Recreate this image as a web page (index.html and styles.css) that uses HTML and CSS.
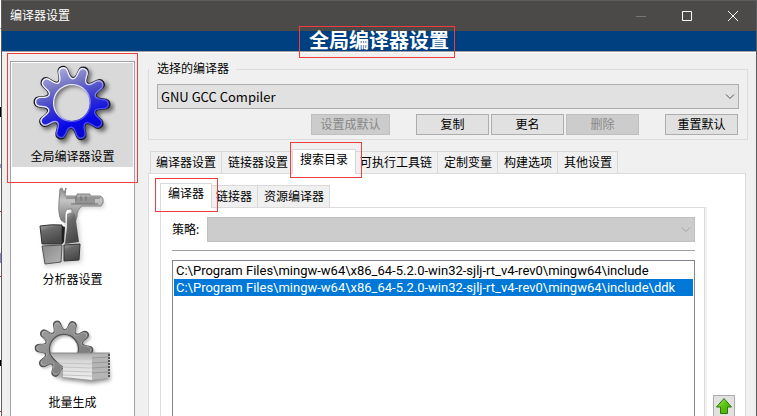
FILE: index.html
```html
<!DOCTYPE html>
<html lang="zh-CN">
<head>
<meta charset="utf-8">
<title>编译器设置</title>
<link rel="stylesheet" href="styles.css">
</head>
<body>
<svg class="defs" aria-hidden="true">
  <defs>
    <path id="gear" fill-rule="evenodd" d="M38.7 0Q38.7 4.8 32.1 4.9Q25.5 5 24.5 8Q23.6 11 28.9 15Q34.1 18.9 31.3 22.8Q28.5 26.6 23.1 22.8Q17.7 19 15.1 20.9Q12.6 22.7 14.5 29Q16.5 35.3 12 36.8Q7.4 38.3 5.3 32Q3.2 25.8 0 25.8Q-3.2 25.8 -5.3 32Q-7.4 38.3 -12 36.8Q-16.5 35.3 -14.5 29Q-12.6 22.7 -15.1 20.9Q-17.7 19 -23.1 22.8Q-28.5 26.6 -31.3 22.8Q-34.1 18.9 -28.9 15Q-23.6 11 -24.5 8Q-25.5 5 -32.1 4.9Q-38.7 4.8 -38.7 0Q-38.7 -4.8 -32.1 -4.9Q-25.5 -5 -24.5 -8Q-23.6 -11 -28.9 -15Q-34.1 -18.9 -31.3 -22.8Q-28.5 -26.6 -23.1 -22.8Q-17.7 -19 -15.1 -20.9Q-12.6 -22.7 -14.5 -29Q-16.5 -35.3 -12 -36.8Q-7.4 -38.3 -5.3 -32Q-3.2 -25.8 0 -25.8Q3.2 -25.8 5.3 -32Q7.4 -38.3 12 -36.8Q16.5 -35.3 14.5 -29Q12.6 -22.7 15.1 -20.9Q17.7 -19 23.1 -22.8Q28.5 -26.6 31.3 -22.8Q34.1 -18.9 28.9 -15Q23.6 -11 24.5 -8Q25.5 -5 32.1 -4.9Q38.7 -4.8 38.7 0ZM19.500 0A19.500 19.500 0 1 0 -19.500 0A19.500 19.500 0 1 0 19.500 0Z"/>
    <linearGradient id="blue" x1=".2" y1="0" x2=".6" y2="1"><stop offset="0" stop-color="#b4b4e4"/><stop offset=".28" stop-color="#7474c4"/><stop offset=".55" stop-color="#3434d0"/><stop offset=".8" stop-color="#0808e8"/><stop offset="1" stop-color="#0808c8"/></linearGradient>
    <linearGradient id="rim" x1="0" y1="0" x2="1" y2="1"><stop offset="0" stop-color="#fff"/><stop offset=".45" stop-color="#e4e4fc"/><stop offset=".65" stop-color="#5050f0"/><stop offset="1" stop-color="#4040f0"/></linearGradient>
    <linearGradient id="steel" x1="0" y1="0" x2="1" y2="1"><stop offset="0" stop-color="#a4a4a4"/><stop offset=".5" stop-color="#8c8c8c"/><stop offset="1" stop-color="#686868"/></linearGradient>
    <linearGradient id="jaw" x1="0" y1="0" x2="0" y2="1"><stop offset="0" stop-color="#8c8c8c"/><stop offset=".35" stop-color="#c4c4c4"/><stop offset="1" stop-color="#747474"/></linearGradient>
    <linearGradient id="block" x1="0" y1="0" x2=".4" y2="1"><stop offset="0" stop-color="#aaa"/><stop offset=".35" stop-color="#6a6a6a"/><stop offset="1" stop-color="#484848"/></linearGradient>
    <linearGradient id="light" x1="0" y1="0" x2="1" y2="1"><stop offset="0" stop-color="#888"/><stop offset="1" stop-color="#b4b4b4"/></linearGradient>
    <linearGradient id="paper" x1="0" y1="0" x2="0" y2="1"><stop offset="0" stop-color="#a8a8a8"/><stop offset=".3" stop-color="#d8d8d8"/><stop offset="1" stop-color="#eee"/></linearGradient>
    <linearGradient id="green" x1="0" y1="0" x2="1" y2="1"><stop offset="0" stop-color="#b4f05c"/><stop offset=".5" stop-color="#58c010"/><stop offset="1" stop-color="#4cb008"/></linearGradient>
  </defs>
</svg>
<div class="dialog">
  <header class="titlebar">
    <span>编译器设置</span>
    <div class="window-buttons">
      <button class="win" aria-label="最小化" disabled><svg width="10" height="10"><path d="M0 5.5H10"/></svg></button>
      <button class="win" aria-label="最大化"><svg width="10" height="10"><path d="M.5 .5H9.5V9.5H.5Z"/></svg></button>
      <button class="win" aria-label="关闭"><svg width="10" height="10"><path d="M0 0L10 10M10 0L0 10"/></svg></button>
    </div>
  </header>
  <h1 class="banner"><span class="banner-text">全局编译器设置<i class="mark mark-banner"></i></span></h1>
  <div class="body">
    <nav class="sidebar">
      <button class="page active">
        <svg width="86" height="86" viewBox="0 0 86 86">
          <g class="soft" transform="translate(45 43) rotate(2)"><use href="#gear" fill="#000" opacity=".55"/></g>
          <g transform="translate(42 40) rotate(2) scale(.97)">
            <use href="#gear" fill="none" stroke="#181824" stroke-width="2"/>
            <use href="#gear" transform="scale(.97)" fill="url(#blue)" stroke="url(#rim)" stroke-width="1.5"/>
          </g>
        </svg>
        <span>全局编译器设置</span>
      </button>
      <button class="page">
        <svg width="86" height="86" viewBox="2 3 86 86">
          <g class="soft"><path fill="#999" opacity=".45" d="M15 48H37V42L40 34 50 35 54 70 54 79 17 84ZM40 18H76V25H54L46 38Z"/></g>
          <path d="M32 6L34 5 36 10 38 5 37 13 49 13V11H62V13H72Q76 14 75 20L73 23H54Q49 26 49 34L47 40 44 36 44 26H41Q37 26 37 32V40L33 37Q30 31 31 19Z" fill="url(#jaw)" stroke="#858585"/>
          <path d="M38 15H72M48 18V13M53 18V13M58 18V13M43 21H70" stroke="#707070" fill="none"/><path d="M47 16H67V21H47Z" fill="#777" opacity=".6"/>
          <path d="M39 31Q43 28 47 31L51 59 37 61 39 44Z" fill="url(#block)"/>
          <path d="M12 43Q24 41 34 42L34 61 14 61Z" fill="url(#block)" stroke="#333"/>
          <path d="M14 63L34 62 33 79 17 81Z" fill="url(#light)" stroke="#555"/>
          <path d="M36 62L52 61 51 77 36 78Z" fill="url(#block)" stroke="#333"/>
          <path d="M34 43L37 44 36 59 34 61Z" fill="#202020"/>
        </svg>
        <span>分析器设置</span>
      </button>
      <button class="page">
        <svg width="86" height="86" viewBox="0 0 86 86">
          <g class="soft" transform="translate(36 42) rotate(2) scale(.74)"><use href="#gear" fill="#777" opacity=".6"/></g>
          <g transform="translate(34 40) rotate(2) scale(.74)"><use href="#gear" fill="url(#steel)" stroke="#555" stroke-width="2"/><use href="#gear" transform="scale(.94)" fill="none" stroke="#bdbdbd"/></g>
          <path class="soft" d="M30 70L62 74 80 71 78 50 60 47 32 61Z" fill="#888"/>
          <path d="M21 44L62 44V71L33 68V57Q26 53 21 44Z" fill="url(#paper)"/>
          <path d="M62 44H80L78 69 62 71Z" fill="#b5b5b5"/>
          <path d="M25 49L62 50M29 54L62 55M33 58L62 59M33 62L62 63M33 66L62 67" stroke="#c4c4c4"/>
          <path d="M62 49L79 48M62 54L79 53M62 59L78 58M62 64L78 63" stroke="#999"/>
          <path d="M21 44H80" stroke="#888"/><path d="M79 45V69" stroke="#555" stroke-width="2" stroke-dasharray="2 1"/>
        </svg>
        <span>批量生成</span>
      </button>
      <i class="mark mark-page"></i>
    </nav>
    <main class="content">
      <fieldset class="group">
        <legend>选择的编译器</legend>
        <div class="combo">
          <select aria-label="选择的编译器"><option>GNU GCC Compiler</option></select>
          <svg class="chevron" width="10" height="6"><path d="M1 .5L5 4.5 9 .5"/></svg>
        </div>
        <div class="actions">
          <button class="push wide" disabled>设置成默认</button>
          <div class="trio"><button class="push">复制</button><button class="push">更名</button><button class="push" disabled>删除</button></div>
          <button class="push">重置默认</button>
        </div>
      </fieldset>
      <div class="tabs" role="tablist">
        <button class="tab" role="tab">编译器设置</button>
        <button class="tab" role="tab">链接器设置</button>
        <button class="tab selected" role="tab" aria-selected="true">搜索目录<i class="mark mark-tab"></i></button>
        <button class="tab" role="tab">可执行工具链</button>
        <button class="tab" role="tab">定制变量</button>
        <button class="tab" role="tab">构建选项</button>
        <button class="tab" role="tab">其他设置</button>
      </div>
      <div class="panel">
        <div class="inner">
          <div class="tabs" role="tablist">
            <button class="tab selected" role="tab" aria-selected="true">编译器<i class="mark mark-inner"></i></button>
            <button class="tab" role="tab">链接器</button>
            <button class="tab" role="tab">资源编译器</button>
          </div>
          <div class="inner-panel">
            <div class="policy">
              <label for="policy">策略:</label>
              <div class="combo">
                <select id="policy" disabled></select>
                <svg class="chevron" width="10" height="6"><path d="M1 .5L5 4.5 9 .5"/></svg>
              </div>
            </div>
            <hr>
            <select class="paths" multiple aria-label="搜索目录">
              <option>C:\Program Files\mingw-w64\x86_64-5.2.0-win32-sjlj-rt_v4-rev0\mingw64\include</option>
              <option selected>C:\Program Files\mingw-w64\x86_64-5.2.0-win32-sjlj-rt_v4-rev0\mingw64\include\ddk</option>
            </select>
          </div>
        </div>
        <button class="up" aria-label="上移"><svg width="18" height="18" viewBox="0 0 18 18"><path d="M9 1.5L16.500 10H12.500V16.500H5.500V10H1.500Z" fill="url(#green)" stroke="#2c7410" stroke-linejoin="round"/></svg></button>
      </div>
    </main>
  </div>
</div>
</body>
</html>
```
FILE: styles.css
```css
* { box-sizing: border-box; }
body {
  margin: 0;
  height: 100vh;
  overflow: hidden;
  padding-left: 1px;
  background: linear-gradient(#fff 28px, #9ab 28px 29px, #fff 29px 107px, #000 107px 117px, #fff 117px 164px, #99c 164px 168px, #fff 168px 211px, #e22 211px 212px, #fff 212px 253px, #88c 253px 263px, #fff 263px 276px, #e22 276px 277px, #fff 277px 360px, #000 360px 366px, #fff 366px 411px, #e22 411px 412px, #fff 412px);
  font: 12px/16px "Noto Sans", "Noto Sans CJK SC", sans-serif;
  color: #000;
}
button, select { font: inherit; color: inherit; border-radius: 0; margin: 0; }
.defs { position: absolute; width: 0; height: 0; }
.soft { filter: blur(2px); }
.dialog {
  height: 100%;
  display: flex;
  flex-direction: column;
  background: #f0f0f0;
  border: 1px solid #5c5c5c;
  border-width: 0 1px;
}
.titlebar {
  flex: none;
  height: 31px;
  display: flex;
  align-items: center;
  justify-content: space-between;
  padding-left: 8px;
  background: #4c4a48;
  border-top: 1px solid #5c5c5c;
  color: #fff;
}
.window-buttons { display: flex; }
.win {
  width: 46px;
  height: 30px;
  padding: 0;
  border: 0;
  background: none;
  display: grid;
  place-items: center;
}
.win path { fill: none; stroke: #fff; }
.win:disabled path { stroke: #777; }
.banner {
  flex: none;
  margin: 0;
  height: 22px;
  background: #004080;
  border-bottom: 1px solid #fff;
  box-shadow: inset 0 -1px #a0a0a0;
  color: #fff;
  text-align: center;
  font-size: 20px;
  line-height: 18px;
  font-weight: 600;
  font-family: "Noto Sans CJK SC", sans-serif;
}
.banner-text { position: relative; display: inline-block; }
.mark {
  position: absolute;
  z-index: 2;
  border: 1px solid #f03c3c;
  pointer-events: none;
}
.mark-banner { inset: -5px -6px -9px -10px; }
.mark-page { top: -9px; left: -4px; right: -4px; height: 130px; }
.mark-tab { inset: -8px -7px -4px -3px; }
.mark-inner { inset: -6px -7px -4px -6px; }
.body { flex: 1; min-height: 0; display: flex; gap: 13px; padding: 8px 8px 0; }
.sidebar {
  position: relative;
  flex: none;
  width: 125px;
  border: 1px solid #a0a0a8;
  border-bottom: 0;
  background: #fff;
  padding: 1px;
  display: flex;
  flex-direction: column;
  gap: 19px;
}
.page {
  flex: none;
  height: 104px;
  padding: 0;
  border: 0;
  background: none;
  display: flex;
  flex-direction: column;
  align-items: center;
}
.page.active { background: #d9d9d9; }
.content { flex: 1; min-width: 0; display: flex; flex-direction: column; }
.group {
  margin: 0 0 9px;
  padding: 7px 8px 4px;
  border: 1px solid #dcdcdc;
  min-width: 0;
}
.group legend { padding: 0 7px 0 8px; margin-left: -8px; }
.combo { position: relative; display: flex; flex: 1; }
.combo select {
  appearance: none;
  width: 100%;
  height: 25px;
  padding: 0 3px;
  border: 1px solid #adadad;
  background: #e1e1e1;
  font-family: "Noto Sans CJK SC", sans-serif;
  font-size: 13px;
}
.combo select:disabled { background: #ccc; border-color: #bfbfbf; opacity: 1; }
.chevron { position: absolute; right: 4px; top: 10px; fill: none; stroke: #555; }
select:disabled + .chevron { stroke: #a0a0a0; }
.actions { display: flex; justify-content: flex-end; gap: 26px; margin-top: 5px; padding-right: 1px; }
.trio { display: flex; gap: 2px; }
.push {
  width: 73px;
  height: 21px;
  padding: 0;
  border: 1px solid #adadad;
  background: #e1e1e1;
  line-height: 18px;
}
.push.wide { width: 79px; }
.push:disabled { background: #ccc; border-color: #bfbfbf; color: #888; }
.tabs { flex: none; display: flex; align-items: flex-end; padding-left: 2px; height: 25px; }
.tab {
  height: 23px;
  padding: 0 5px 0 6px;
  border: 1px solid #d9d9d9;
  border-left-width: 0;
  background: #f0f0f0;
  white-space: nowrap;
}
.tab:first-child { border-left-width: 1px; padding-left: 5px; }
.tab.selected {
  position: relative;
  z-index: 1;
  height: 25px;
  padding: 0 7px 4px;
  background: #fff;
  border-left-width: 1px;
  border-bottom: 0;
  margin: 0 -2px 0 -2px;
}
.panel {
  flex: 1;
  min-height: 0;
  display: flex;
  gap: 8px;
  margin: -1px 2px 0 0;
  padding: 9px 10px 0 11px;
  border: 1px solid #dcdcdc;
  border-bottom: 0;
  background: #fff;
}
.inner { flex: 1; min-width: 0; display: flex; flex-direction: column; }
.inner-panel {
  flex: 1;
  min-height: 0;
  display: flex;
  flex-direction: column;
  margin-top: -1px;
  padding: 9px 9px 0 11px;
  border: 1px solid #dcdcdc;
  border-bottom: 0;
  box-shadow: 2px 0 #f0f0f0;
}
.policy { display: flex; align-items: center; gap: 8px; }
hr { width: 100%; margin: 8px 0 9px; border: 0; border-top: 1px solid #a0a0a0; }
.paths {
  flex: 1;
  min-height: 0;
  width: 100%;
  padding: 1px;
  border: 1px solid #828790;
  border-bottom: 0;
  background: #fff;
  overflow: hidden;
  outline: 0;
  font-family: Roboto, sans-serif;
  font-size: 13px;
}
.paths option { height: 17px; min-height: 17px; padding: 1px 2px 0; line-height: 16px; }
.paths option:checked { background: #0078d7 linear-gradient(#0078d7, #0078d7); color: #fff; }
.up {
  align-self: flex-end;
  flex: none;
  width: 22px;
  height: 21px;
  padding: 0;
  border: 1px solid #adadad;
  border-bottom: 0;
  background: #e1e1e1;
  display: grid;
  place-items: center;
}
```
